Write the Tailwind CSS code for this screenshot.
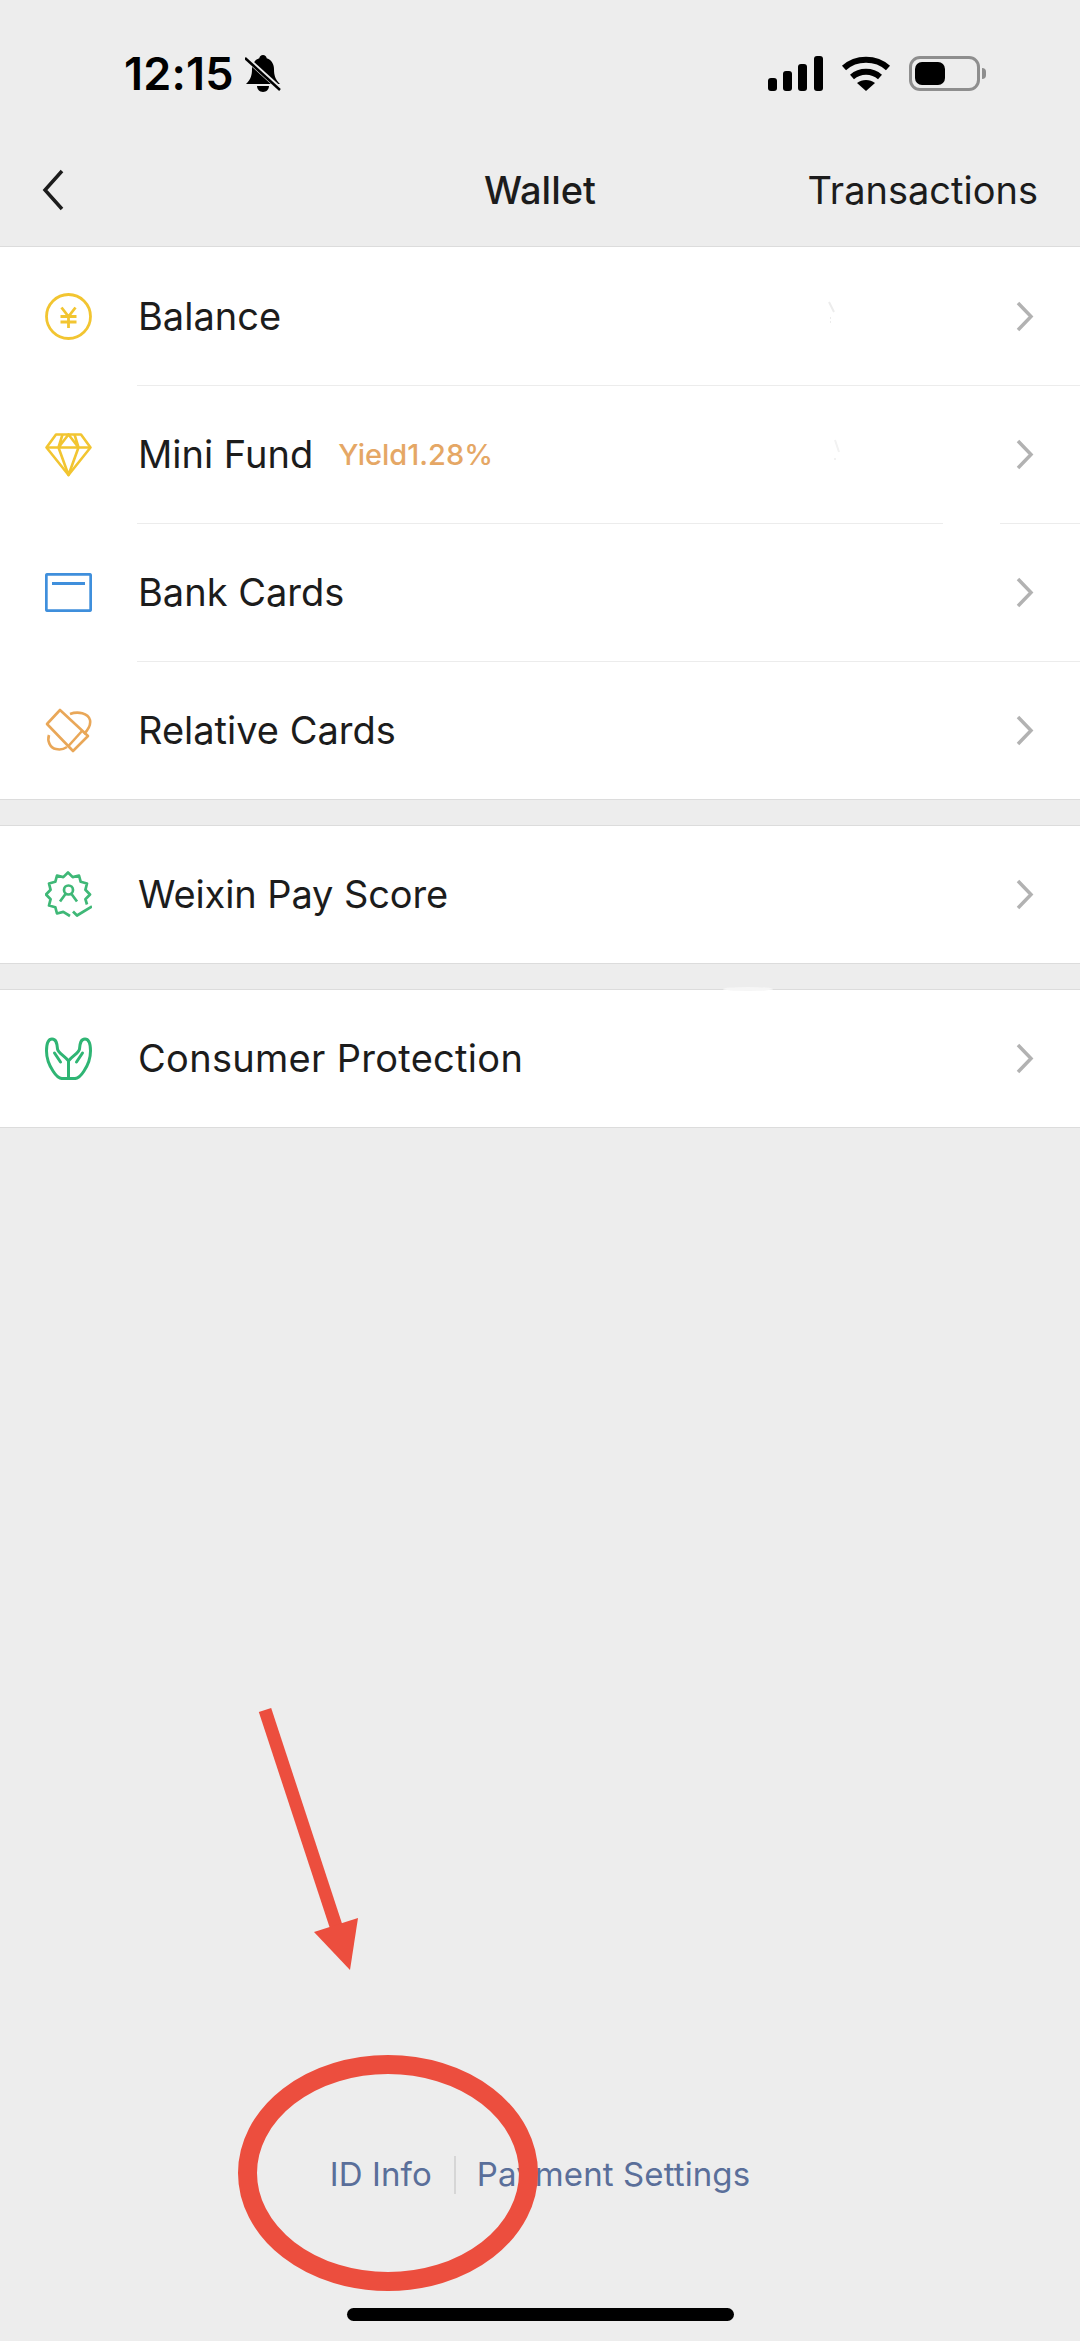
<!DOCTYPE html>
<html lang="en">
<head>
    <meta charset="UTF-8">
    <meta name="viewport" content="width=device-width, initial-scale=1.0">
    <title>Wallet</title>
    <script src="https://cdn.jsdelivr.net/npm/@tailwindcss/browser@4"></script>
</head>
<body class="bg-[#ededed]">
<div class="relative w-[1080px] h-[2341px] flex flex-col overflow-hidden bg-[#ededed] text-[#1c1c1c] font-['Inter',sans-serif]">

    <!-- Status bar -->
    <div class="h-[134px] flex justify-between items-start pt-[55px] pl-[124px] pr-[94px] shrink-0">
        <div class="flex items-center h-[37px] gap-[11px]">
            <span class="text-[45px] leading-[37px] font-semibold text-black tracking-[0.2px]">12:15</span>
            <svg width="36" height="38" viewBox="0 0 36 38" fill="none">
                <path d="M18 0c2 0 3.500 1.500 3.700 3.200C27 5 29 9.500 29 14c0 6 1 10 6 15H1c5-5 6-9 6-15 0-4.500 2-9 7.300-10.800C14.500 1.500 16 0 18 0z" fill="#000"/>
                <path d="M12 31h12c0 3-2.500 6-6 6s-6-3-6-6z" fill="#000"/>
                <path d="M2 4l34 31" stroke="#ededed" stroke-width="5"/>
                <path d="M0 3l35 32" stroke="#000" stroke-width="2.500"/>
            </svg>
        </div>
        <div class="flex items-center h-[37px] gap-[18px]">
            <svg width="55" height="35" viewBox="0 0 55 35" fill="#000">
                <rect x="0" y="22" width="9" height="13" rx="3"/>
                <rect x="15" y="15" width="9" height="20" rx="3"/>
                <rect x="30" y="8" width="9" height="27" rx="3"/>
                <rect x="46" y="0" width="9" height="35" rx="3"/>
            </svg>
            <svg width="50" height="36" viewBox="0 0 50 36" fill="none" stroke="#000" stroke-width="6">
                <path d="M3 12C15 1 35 1 47 12"/>
                <path d="M11 21c8-7 20-7 28 0"/>
                <path d="M25 35l-9-8c5-4 13-4 18 0z" fill="#000" stroke="none"/>
            </svg>
            <div class="flex items-center gap-[2px]">
                <div class="w-[71px] h-[35px] rounded-[11px] border-[3px] border-[#8e8e8e] p-[3px]">
                    <div class="w-[30px] h-full rounded-[7px] bg-black"></div>
                </div>
                <div class="w-[4px] h-[11px] rounded-r-full bg-[#8e8e8e]"></div>
            </div>
        </div>
    </div>

    <!-- Nav bar -->
    <div class="h-[113px] grid grid-cols-3 items-center px-[42px] border-b border-[#dcdcdc] shrink-0">
        <svg width="22" height="42" viewBox="0 0 22 42" fill="none" stroke="#1c1c1c" stroke-width="3.500">
            <path d="M20 2L3 21l17 19"/>
        </svg>
        <div class="text-center text-[38px] font-[550]">Wallet</div>
        <div class="text-right text-[38px] whitespace-nowrap">Transactions</div>
    </div>

    <!-- Main group -->
    <div class="bg-white border-b border-[#dcdcdc] shrink-0">
        <div class="h-[138px] flex items-center pl-[45px] pr-[46px]">
            <svg class="w-[47px] h-[47px] mr-[46px]" viewBox="0 0 47 47" fill="none" stroke="#f2c531" stroke-width="2.800">
                <circle cx="23.500" cy="23.500" r="22"/>
                <path d="M16.500 14.500l7 9 7-9M15.500 23.500h16M15.500 29h16M23.500 23.500V35"/>
            </svg>
            <span class="text-[38px]">Balance</span>
            <svg class="ml-auto" width="18" height="31" viewBox="0 0 18 31" fill="none" stroke="#b2b2b2" stroke-width="3.500"><path d="M2 2l13 13.500L2 29"/></svg>
        </div>
        <div class="h-px ml-[137px] bg-[#ececec]"></div>
        <div class="h-[137px] flex items-center pl-[45px] pr-[46px]">
            <svg class="w-[47px] h-[44px] mr-[46px]" viewBox="0 0 47 44" fill="none" stroke="#f2c531" stroke-width="2.600" stroke-linejoin="round">
                <path d="M11 1.500h25l9.500 13L23.500 42 1.500 14.500z"/>
                <path d="M1.500 14.500h44M13.500 14.500l10 27.500 10-27.500M13.500 14.500L17.500 1.500M33.500 14.500L29.500 1.500M13.500 14.500l10-13 10 13"/>
            </svg>
            <span class="text-[38px]">Mini Fund</span>
            <span class="ml-[25px] text-[29px] font-medium text-[#e5a765]">Yield1.28%</span>
            <svg class="ml-auto" width="18" height="31" viewBox="0 0 18 31" fill="none" stroke="#b2b2b2" stroke-width="3.500"><path d="M2 2l13 13.500L2 29"/></svg>
        </div>
        <div class="h-px ml-[137px] bg-[#ececec]"></div>
        <div class="h-[137px] flex items-center pl-[45px] pr-[46px]">
            <svg class="w-[47px] h-[39px] mr-[46px]" viewBox="0 0 47 39" fill="none" stroke="#3f8fdc" stroke-width="2.800">
                <rect x="1.300" y="1.300" width="44.400" height="36.400" rx="1.500"/>
                <path d="M7 10.500h33" stroke-width="3"/>
            </svg>
            <span class="text-[38px]">Bank Cards</span>
            <svg class="ml-auto" width="18" height="31" viewBox="0 0 18 31" fill="none" stroke="#b2b2b2" stroke-width="3.500"><path d="M2 2l13 13.500L2 29"/></svg>
        </div>
        <div class="h-px ml-[137px] bg-[#ececec]"></div>
        <div class="h-[137px] flex items-center pl-[45px] pr-[46px]">
            <svg class="w-[47px] h-[45px] mr-[46px]" viewBox="0 0 47 45" fill="none" stroke="#e9a758" stroke-width="2.600" stroke-linejoin="round">
                <path d="M15 2l28 26-15 15L2 16z"/>
                <path d="M37 23L23 38.500"/>
                <path d="M25 6c8-3 18-1 20 6 1 5-2 10-6 14"/>
                <path d="M4 27c-2 6 1 13 7 14 4 1 8 0 11-2"/>
            </svg>
            <span class="text-[38px]">Relative Cards</span>
            <svg class="ml-auto" width="18" height="31" viewBox="0 0 18 31" fill="none" stroke="#b2b2b2" stroke-width="3.500"><path d="M2 2l13 13.500L2 29"/></svg>
        </div>
    </div>

    <!-- Pay score -->
    <div class="mt-[25px] h-[139px] flex items-center pl-[45px] pr-[46px] bg-white border-y border-[#dcdcdc] shrink-0">
        <svg class="w-[47px] h-[47px] mr-[46px]" viewBox="0 -1.500 47 47" fill="none" stroke="#3fb877" stroke-width="2.700" stroke-linejoin="round">
            <path d="M25 43.500L18.300 39.400 12 41 10.300 34.700 4 33 5.600 26.700 1 22 5.600 17.300 4 11 10.300 9.300 12 3 18.300 4.600 23 0 27.700 4.600 34 3 35.700 9.300 42 11 40.400 17.300 45 22 40.400 26.700 42 32"/>
            <circle cx="23.500" cy="17.500" r="4.500"/>
            <path d="M20.500 21.500L15 29M26.500 21.500L32 29"/>
            <path d="M28 39l4 4 15-9"/>
        </svg>
        <span class="text-[38px] tracking-[-0.1px]">Weixin Pay Score</span>
        <svg class="ml-auto" width="18" height="31" viewBox="0 0 18 31" fill="none" stroke="#b2b2b2" stroke-width="3.500"><path d="M2 2l13 13.500L2 29"/></svg>
    </div>

    <!-- Consumer protection -->
    <div class="mt-[25px] h-[139px] flex items-center pl-[45px] pr-[46px] bg-white border-y border-[#dcdcdc] shrink-0">
        <svg class="w-[47px] h-[43px] mr-[46px]" viewBox="0 0 47 43" fill="none" stroke="#2fb574" stroke-width="3" stroke-linejoin="round" stroke-linecap="round">
            <path d="M23.500 41.500V24C20 19 13 16 12.500 12 12 8 12 2 7 2 3 2 1.500 8 1.500 14c0 8 2.500 14 6.500 20 2.500 4 6 7.500 9 7.500z"/>
            <path d="M23.500 41.500V24C27 19 34 16 34.500 12 35 8 35 2 40 2c4 0 5.500 6 5.500 12 0 8-2.500 14-6.500 20-2.500 4-6 7.500-9 7.500z"/>
            <path d="M17 41.500h13M9.500 16l6 9M37.500 16l-6 9"/>
        </svg>
        <span class="text-[38px] tracking-[0.3px]">Consumer Protection</span>
        <svg class="ml-auto" width="18" height="31" viewBox="0 0 18 31" fill="none" stroke="#b2b2b2" stroke-width="3.500"><path d="M2 2l13 13.500L2 29"/></svg>
    </div>

    <!-- Footer links and home bar -->
    <div class="mt-auto flex flex-col items-center shrink-0 pb-[20px]">
        <div class="h-[38px] flex items-center text-[33px] tracking-[0.1px] text-[#5a6f9a]">
            <span>ID Info</span>
            <span class="w-[2px] h-[38px] ml-[22px] mr-[21px] bg-[#d6d6d6]"></span>
            <span>Payment Settings</span>
        </div>
        <div class="mt-[114px] w-[387px] h-[13px] rounded-full bg-black"></div>
    </div>

    <!-- Red annotation and retouch marks drawn over the screenshot -->
    <svg class="absolute inset-0 pointer-events-none" width="1080" height="2341" viewBox="0 0 1080 2341" fill="none">
        <path d="M265 1710L336 1926" stroke="#ec4e3e" stroke-width="13"/>
        <path d="M314 1932L358 1918 350 1970z" fill="#ec4e3e"/>
        <ellipse cx="388" cy="2173" rx="140.500" ry="108.500" stroke="#ec4e3e" stroke-width="19"/>
        <rect x="943" y="521" width="57" height="3" fill="#fff"/>
        <ellipse cx="748" cy="989" rx="25" ry="2" fill="#f6f6f6"/>
        <path d="M829 302l5 10M830 318h1M830 322h1" stroke="#ececec" stroke-width="2"/>
        <path d="M835 440l4 12M834 459h2" stroke="#f2f2f2" stroke-width="2"/>
    </svg>
</div>
</body>
</html>
